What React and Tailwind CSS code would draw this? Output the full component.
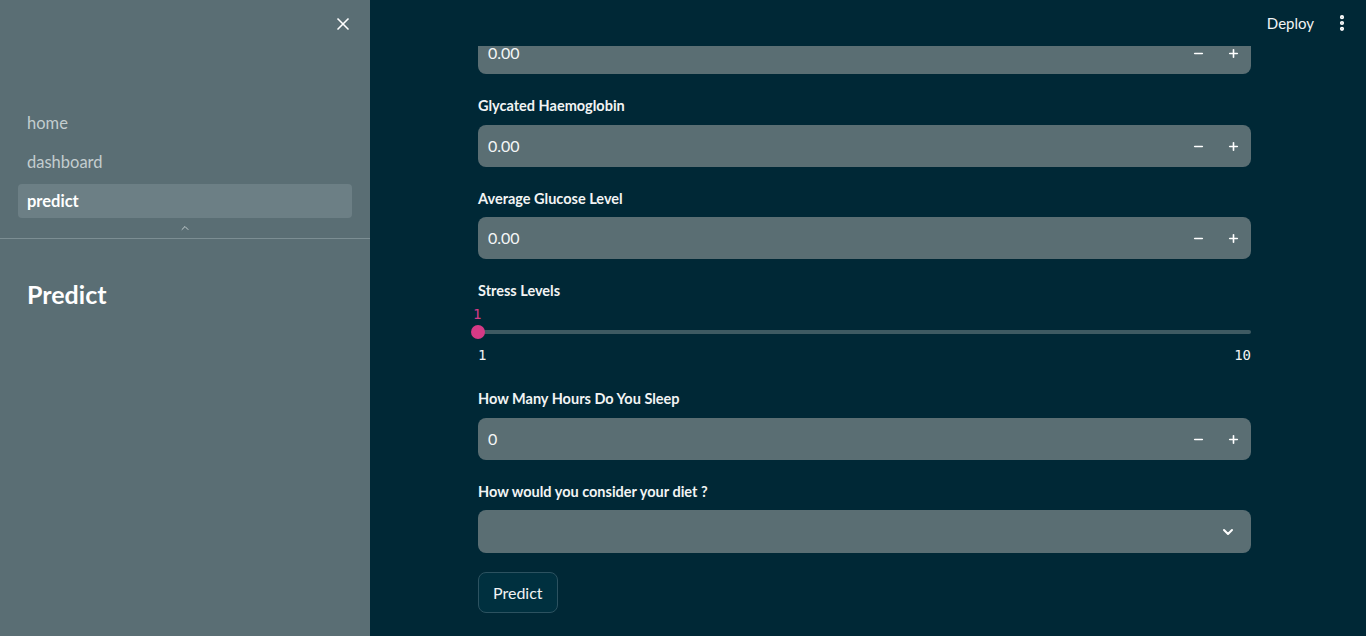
import { X, ChevronUp, ChevronDown, Minus, Plus, EllipsisVertical } from 'lucide-react'

const font = { fontFamily: 'Lato, "Noto Sans", sans-serif' }
const mono = { fontFamily: '"DejaVu Sans Mono", monospace' }

function NumberInput({ value, className = '' }) {
  return (
    <div className={`flex items-center h-[42px] bg-[#5a6e73] rounded-lg ${className}`}>
      <div className="flex-1 pl-[10px] text-[16px] text-[#f4f6f6]">{value}</div>
      <div className="flex items-center h-full">
        <div className="w-[35px] h-full flex items-center justify-center text-white">
          <Minus size={13} strokeWidth={3} />
        </div>
        <div className="w-[35px] h-full flex items-center justify-center text-white">
          <Plus size={13} strokeWidth={3} />
        </div>
      </div>
    </div>
  )
}

function Label({ children, className = '' }) {
  return <div className={`h-[20px] leading-[20px] text-[14.5px] font-bold text-[#f2f4f4] ${className}`}>{children}</div>
}

export default function App() {
  return (
    <div className="flex w-[1366px] h-[636px] overflow-hidden" style={font}>
      {/* Sidebar */}
      <aside className="w-[370px] h-full bg-[#5a6e74] flex flex-col shrink-0">
        <div className="h-[48px] flex justify-end items-center pr-[17px]">
          <X size={20} strokeWidth={2} className="text-white" />
        </div>
        <nav className="px-[18px] pt-[58px] flex flex-col gap-[5px]">
          <div className="h-[34px] flex items-center px-[9px] text-[16.5px] text-[#c3cdcf]">home</div>
          <div className="h-[34px] flex items-center px-[9px] text-[16.5px] text-[#c3cdcf]">dashboard</div>
          <div className="h-[34px] flex items-center px-[9px] text-[16.5px] font-bold text-white bg-[#6c7f85] rounded">predict</div>
        </nav>
        <div className="flex justify-center h-[20px] items-center text-[#c3cdcf]">
          <ChevronUp size={12} strokeWidth={2} />
        </div>
        <div className="border-t border-[#7c8e93]" />
        <h2 className="px-[27px] pt-[37px] text-[25px] font-bold text-white">Predict</h2>
      </aside>

      {/* Main */}
      <main className="flex-1 h-full bg-[#002836] flex flex-col">
        <header className="h-[46px] flex items-center justify-end pr-[14px] gap-[18px]">
          <span className="text-[15px] text-[#f2f4f4]">Deploy</span>
          <EllipsisVertical size={20} strokeWidth={3} className="text-white" />
        </header>

        <div className="pl-[108px] w-[881px] flex flex-col">
          <div className="flex items-center h-[28px] bg-[#5a6e73] rounded-b-lg">
            <div className="flex-1 pl-[10px] text-[16px] text-[#f4f6f6] -mt-[14px]">0.00</div>
            <div className="flex items-center -mt-[14px]">
              <div className="w-[35px] flex justify-center text-white"><Minus size={13} strokeWidth={3} /></div>
              <div className="w-[35px] flex justify-center text-white"><Plus size={13} strokeWidth={3} /></div>
            </div>
          </div>

          <Label className="mt-[22px]">Glycated Haemoglobin</Label>
          <NumberInput value="0.00" className="mt-[9px]" />

          <Label className="mt-[22px]">Average Glucose Level</Label>
          <NumberInput value="0.00" className="mt-[8px]" />

          <Label className="mt-[22px]">Stress Levels</Label>
          <div className="mt-[3px] h-[20px] text-[14px] text-[#d53a86] leading-[20px] -ml-[5px]" style={mono}>1</div>
          <div className="relative h-[16px] flex items-center">
            <div className="w-full h-[4px] bg-[#3e5a62] rounded-full" />
            <div className="absolute -left-[7px] w-[14px] h-[14px] rounded-full bg-[#d53a86]" />
          </div>
          <div className="mt-[4px] flex justify-between h-[22px] items-center text-[14px] text-[#f2f4f4]" style={mono}>
            <span>1</span>
            <span>10</span>
          </div>

          <Label className="mt-[23px]">How Many Hours Do You Sleep</Label>
          <NumberInput value="0" className="mt-[9px]" />

          <Label className="mt-[22px]">How would you consider your diet ?</Label>
          <div className="mt-[8px] h-[43px] bg-[#5a6e73] rounded-lg flex items-center justify-end pr-[15px] text-white">
            <ChevronDown size={16} strokeWidth={3} />
          </div>

          <div className="mt-[19px]">
            <button className="h-[41px] px-[14px] text-[16px] text-[#f2f4f4] bg-[#00303f] border border-[#2c5260] rounded-lg">
              Predict
            </button>
          </div>
        </div>
      </main>
    </div>
  )
}
